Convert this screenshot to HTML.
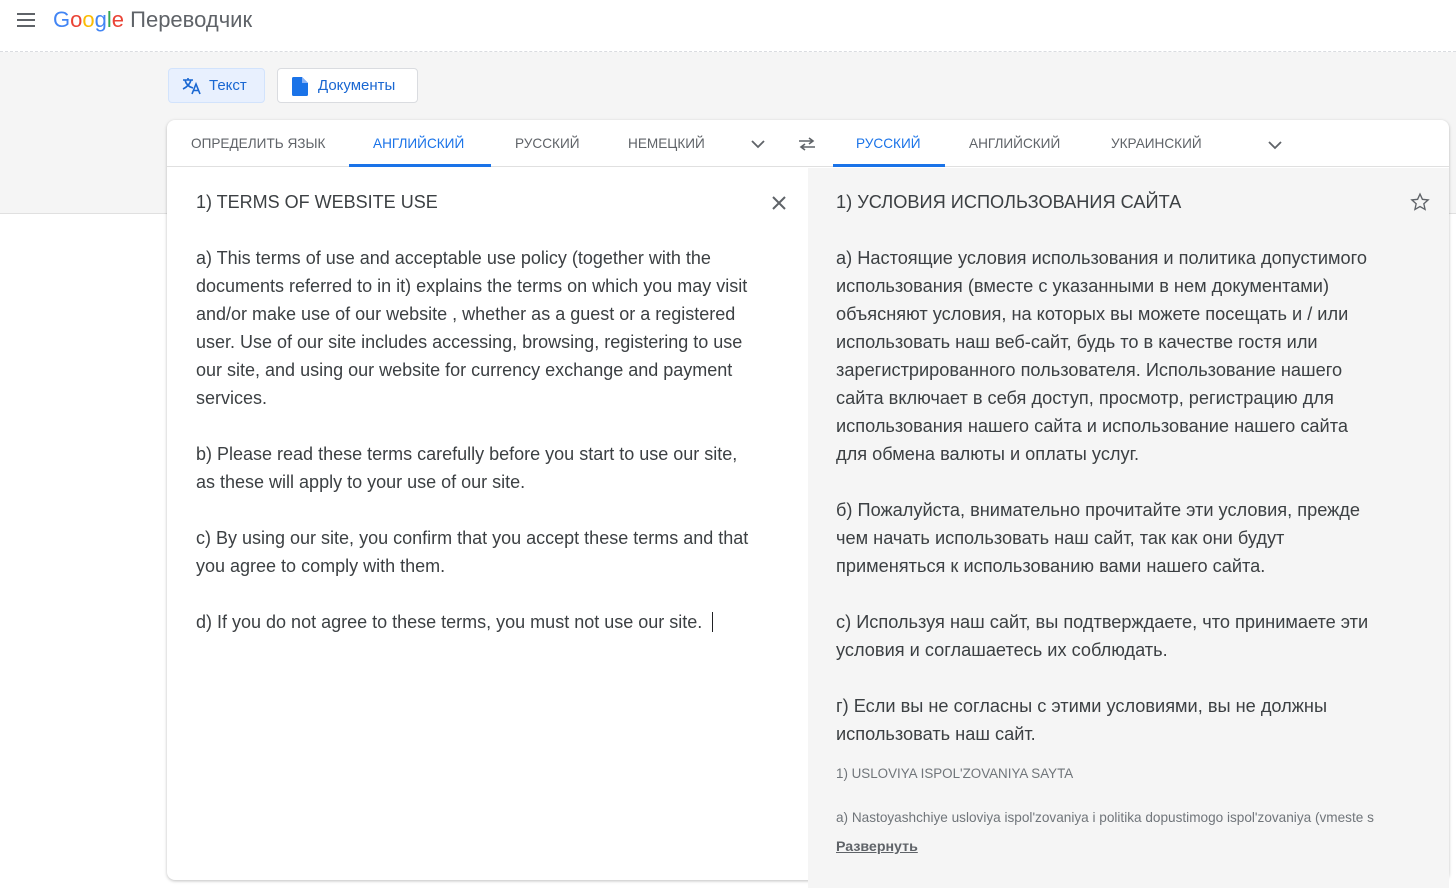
<!DOCTYPE html>
<html><head><meta charset="utf-8"><style>
*{margin:0;padding:0;box-sizing:border-box}
body{width:1456px;height:871px;overflow:hidden;background:#fff;font-family:"Liberation Sans",Arial,sans-serif;position:relative;color:#3c4043}
.hdr{position:absolute;left:0;top:0;width:1456px;height:52px;background:#fff;border-bottom:1px dashed #dadce0}
.band{position:absolute;left:0;top:52px;width:1456px;height:162px;background:#f5f5f5;border-bottom:1px solid #e0e0e0}
.btn{position:absolute;top:68px;height:35px;border-radius:4px;font-size:15px;line-height:33px;color:#1967d2;font-weight:bold}
.card{position:absolute;left:167px;top:120px;width:1282px;height:760px;background:#fff;border-radius:8px;box-shadow:0 1px 3px rgba(0,0,0,.25)}
.tabs{position:absolute;left:0;top:0;width:1282px;height:47px;border-bottom:1px solid #e0e0e0}
.tab{position:absolute;top:16px;font-size:13.6px;color:#5f6368}
.tab.a{color:#1a73e8}
.ul{position:absolute;top:44px;height:3px;background:#1a73e8}
.right{position:absolute;left:641px;top:48px;width:641px;height:720px;background:#f5f5f5}
.txt{position:absolute;font-size:18px;line-height:28px;color:#3c4043;white-space:pre}
</style></head><body>
<div class="hdr">
<div style="position:absolute;left:17px;top:13px;width:18px">
<div style="height:2px;background:#5f6368;margin-bottom:4px"></div><div style="height:2px;background:#5f6368;margin-bottom:4px"></div><div style="height:2px;background:#5f6368"></div></div>
<div style="position:absolute;left:53px;top:7px;font-size:22px;white-space:nowrap"><span style="color:#4285f4">G</span><span style="color:#ea4335">o</span><span style="color:#fbbc05">o</span><span style="color:#4285f4">g</span><span style="color:#34a853">l</span><span style="color:#ea4335">e</span> <span style="color:#5f6368">Переводчик</span></div>
</div>
<div class="band"></div>
<div class="btn" style="left:168px;width:97px;background:#e8f0fe;border:1px solid #d2e3fc">
<svg style="position:absolute;left:13px;top:8px" width="20" height="18" viewBox="0 0 20 18"><path d="M1 3h10M6 1v2M3 3c1 4 4 7 8 8M9 3c-1 4-4 7-8 9" stroke="#1967d2" stroke-width="1.6" fill="none"/><path d="M10 17l4-10 4 10M11.5 13.5h5" stroke="#1967d2" stroke-width="1.6" fill="none"/></svg>
<span style="position:absolute;left:40px;font-weight:normal">Текст</span></div>
<div class="btn" style="left:277px;width:141px;background:#fff;border:1px solid #dadce0">
<svg style="position:absolute;left:14px;top:8px" width="16" height="19" viewBox="0 0 16 19"><path d="M0 1.5Q0 0 1.5 0H10L16 6V17.5Q16 19 14.5 19H1.5Q0 19 0 17.5Z" fill="#1a73e8"/><path d="M10 0V6H16" fill="#8ab4f8"/></svg>
<span style="position:absolute;left:40px;font-weight:normal">Документы</span></div>
<div class="card">
<div class="tabs">
<div class="tab" style="left:24px">ОПРЕДЕЛИТЬ ЯЗЫК</div>
<div class="tab a" style="left:206px">АНГЛИЙСКИЙ</div>
<div class="ul" style="left:182px;width:142px"></div>
<div class="tab" style="left:348px">РУССКИЙ</div>
<div class="tab" style="left:461px">НЕМЕЦКИЙ</div>
<svg style="position:absolute;left:584px;top:19px" width="14" height="10"><path d="M1 2l6 6 6-6" stroke="#5f6368" stroke-width="1.8" fill="none"/></svg>
<svg style="position:absolute;left:630px;top:17px" width="20" height="14"><path d="M2 4h14M12 1l4 3-4 3M18 10H4M8 7l-4 3 4 3" stroke="#5f6368" stroke-width="1.6" fill="none"/></svg>
<div class="tab a" style="left:689px">РУССКИЙ</div>
<div class="ul" style="left:666px;width:112px"></div>
<div class="tab" style="left:802px">АНГЛИЙСКИЙ</div>
<div class="tab" style="left:944px">УКРАИНСКИЙ</div>
<svg style="position:absolute;left:1101px;top:20px" width="14" height="10"><path d="M1 2l6 6 6-6" stroke="#5f6368" stroke-width="1.8" fill="none"/></svg>
</div>
<div class="right"></div>
<svg style="position:absolute;left:604px;top:75px" width="16" height="16"><path d="M2 2l12 12M14 2L2 14" stroke="#5f6368" stroke-width="2"/></svg>
<svg style="position:absolute;left:1243px;top:72px" width="20" height="20" viewBox="0 0 24 24"><path d="M12 2.5l2.9 6.3 6.9.7-5.2 4.6 1.5 6.8L12 17.4l-6.1 3.5 1.5-6.8-5.2-4.6 6.9-.7z" stroke="#5f6368" stroke-width="1.6" fill="none"/></svg>
</div>
<div class="txt" style="left:196px;top:188px">1) TERMS OF WEBSITE USE

a) This terms of use and acceptable use policy (together with the
documents referred to in it) explains the terms on which you may visit
and/or make use of our website , whether as a guest or a registered
user. Use of our site includes accessing, browsing, registering to use
our site, and using our website for currency exchange and payment
services.

b) Please read these terms carefully before you start to use our site,
as these will apply to your use of our site.

c) By using our site, you confirm that you accept these terms and that
you agree to comply with them.

d) If you do not agree to these terms, you must not use our site.  <span style="border-left:1.5px solid #202124"></span></div>
<div class="txt" style="left:836px;top:188px;font-size:18.2px">1) УСЛОВИЯ ИСПОЛЬЗОВАНИЯ САЙТА

а) Настоящие условия использования и политика допустимого
использования (вместе с указанными в нем документами)
объясняют условия, на которых вы можете посещать и / или
использовать наш веб-сайт, будь то в качестве гостя или
зарегистрированного пользователя. Использование нашего
сайта включает в себя доступ, просмотр, регистрацию для
использования нашего сайта и использование нашего сайта
для обмена валюты и оплаты услуг.

б) Пожалуйста, внимательно прочитайте эти условия, прежде
чем начать использовать наш сайт, так как они будут
применяться к использованию вами нашего сайта.

с) Используя наш сайт, вы подтверждаете, что принимаете эти
условия и соглашаетесь их соблюдать.

г) Если вы не согласны с этими условиями, вы не должны
использовать наш сайт.</div>
<div class="txt" style="left:836px;top:765px;font-size:13.4px;line-height:18px;color:#70757a">1) USLOVIYA ISPOL'ZOVANIYA SAYTA</div>
<div class="txt" style="left:836px;top:809px;font-size:13.6px;line-height:18px;color:#70757a">a) Nastoyashchiye usloviya ispol'zovaniya i politika dopustimogo ispol'zovaniya (vmeste s</div>
<div class="txt" style="left:836px;top:838px;font-size:14.2px;line-height:18px;color:#5f6368;font-weight:bold;text-decoration:underline">Развернуть</div>
</body></html>
